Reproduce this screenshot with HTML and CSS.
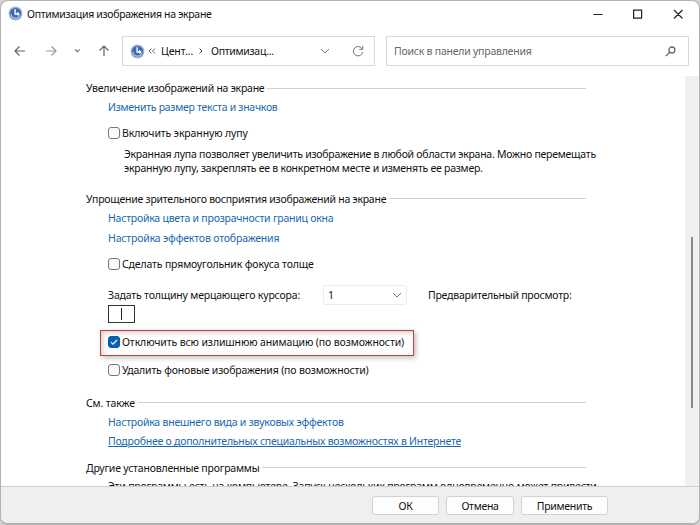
FILE: index.html
```html
<!DOCTYPE html>
<html lang="ru">
<head>
  <meta charset="UTF-8">
  <title>Оптимизация изображения на экране</title>
  <link rel="stylesheet" href="styles.css">
</head>
<body>
  <svg width="0" height="0" class="defs">
    <symbol id="ease" viewBox="0 0 16 16">
      <circle cx="8" cy="8" r="7.4" fill="#9fb0d3"/>
      <circle cx="8" cy="8" r="5.9" fill="#3d68b4"/>
      <path d="M3.2 8.500a4.800 4.800 0 0 0 9.400 1" fill="none" stroke="#b9cbe8" stroke-width="1.200"/>
      <path d="M7.600 3.500v5h3.600M9.800 7l1.600 1.500-1.600 1.400" fill="none" stroke="#fff" stroke-width="1.500"/>
    </symbol>
    <symbol id="down" viewBox="0 0 10 10">
      <path d="M1 3l4 4 4-4" fill="none" stroke="currentColor"/>
    </symbol>
  </svg>

  <div class="window">
    <header class="titlebar">
      <svg class="app-icon"><use href="#ease"/></svg>
      <span class="title">Оптимизация изображения на экране</span>
      <svg class="controls" width="90" height="12" viewBox="0 0 90 12" fill="none" stroke="#222" stroke-width="1.2">
        <path d="M.5 6.5h9M40.600 2.100h8v8h-8zM81 2l8.500 8.500M89.500 2L81 10.500"/>
      </svg>
    </header>

    <nav class="toolbar">
      <svg class="arrows" width="96" height="14" viewBox="0 0 96 14" fill="none" stroke-width="1.2">
        <path d="M11 7H1M5.500 2.500L1 7l4.500 4.500" stroke="#666"/>
        <path d="M32 7h10M37.500 2.500L42 7l-4.500 4.500" stroke="#999"/>
        <path d="M61 5.500l2.300 2.200L65.600 5.500" stroke="#777"/>
        <path d="M90 12V2M85.500 6.500L90 2l4.500 4.500" stroke="#666"/>
      </svg>
      <div class="address">
        <svg class="app-icon"><use href="#ease"/></svg>
        <svg class="back" width="8" height="8" viewBox="0 0 8 8"><path d="M3.500 1.500L1 4l2.500 2.500M7 1.500L4.500 4 7 6.500" fill="none" stroke="#555" stroke-width=".9"/></svg>
        <span class="crumb first">Цент...</span>
        <svg class="next" width="6" height="8" viewBox="0 0 6 8"><path d="M1.500 1.500L4 4 1.500 6.500" fill="none" stroke="#444"/></svg>
        <span class="crumb second">Оптимизац...</span>
        <svg class="chevron"><use href="#down"/></svg>
        <svg class="refresh" width="12" height="12" viewBox="0 0 12 12" fill="none" stroke="#777"><path d="M10.300 4.200A4.700 4.700 0 1 0 10.700 7M10.700 1v3.400H7.300"/></svg>
      </div>
      <div class="search">
        <span class="placeholder">Поиск в панели управления</span>
        <svg width="11" height="11" viewBox="0 0 11 11" fill="none" stroke="#666" stroke-width="1.300"><circle cx="6.900" cy="4" r="3"/><path d="M4.700 6.200L.8 10.100"/></svg>
      </div>
    </nav>

    <div class="body">
      <main class="content">
        <section class="group magnify">
          <h2>Увеличение изображений на экране</h2>
          <div class="link"><a class="l-size">Изменить размер текста и значков</a></div>
          <label class="check"><i class="box"></i><span class="c-lens">Включить экранную лупу</span></label>
          <p class="hint">Экранная лупа позволяет увеличить изображение в любой области экрана. Можно перемещать<br>экранную лупу, закреплять ее в конкретном месте и изменять ее размер.</p>
        </section>

        <section class="group visual">
          <h2>Упрощение зрительного восприятия изображений на экране</h2>
          <div class="link"><a>Настройка цвета и прозрачности границ окна</a></div>
          <div class="link"><a class="l-effects">Настройка эффектов отображения</a></div>
          <label class="check"><i class="box"></i><span>Сделать прямоугольник фокуса толще</span></label>
          <div class="cursor-row">
            <span class="cursor-label">Задать толщину мерцающего курсора:</span>
            <div class="select"><span>1</span><svg class="chevron"><use href="#down"/></svg></div>
            <span class="preview-label">Предварительный просмотр:</span>
          </div>
          <div class="preview"><i></i></div>
          <div class="highlight">
            <label class="check"><i class="box checked"><svg width="8" height="8" viewBox="0 0 8 8"><path d="M1 4.200l2 2L7 2" fill="none" stroke="#fff" stroke-width="1.100"/></svg></i><span class="c-anim">Отключить всю излишнюю анимацию (по возможности)</span></label>
          </div>
          <label class="check last"><i class="box"></i><span class="c-back">Удалить фоновые изображения (по возможности)</span></label>
        </section>

        <section class="group also">
          <h2 class="h-also">См. также</h2>
          <div class="link"><a>Настройка внешнего вида и звуковых эффектов</a></div>
          <div class="link"><a class="l-more">Подробнее о дополнительных специальных возможностях в Интернете</a></div>
        </section>

        <section class="group other">
          <h2 class="h-other">Другие установленные программы</h2>
          <p>Эти программы есть на компьютере. Запуск нескольких программ одновременно может привести</p>
        </section>
      </main>
      <div class="scrollbar"><div class="thumb"></div></div>
    </div>

    <footer class="footer">
      <button class="ok">ОК</button>
      <button class="cancel">Отмена</button>
      <button class="apply">Применить</button>
    </footer>
  </div>
</body>
</html>
```
FILE: styles.css
```css
* {
  box-sizing: border-box;
}

body {
  margin: 0;
  height: 525px;
  overflow: hidden;
  background: #d4d4d4;
  font-family: "Noto Sans", "Open Sans", sans-serif;
  font-size: 10.5px;
  letter-spacing: -.23px;
  color: #111;
  white-space: nowrap;
}

.defs {
  display: block;
}

.window {
  display: flex;
  flex-direction: column;
  width: 700px;
  height: 525px;
  border: 1px solid #b2b2b2;
  border-bottom-width: 2px;
  border-radius: 8px;
  background: #fff;
  overflow: hidden;
}

svg {
  flex: none;
}

.app-icon {
  width: 15px;
  height: 15px;
}

.chevron {
  width: 10px;
  height: 10px;
  color: #777;
}

.titlebar {
  display: flex;
  align-items: center;
  height: 25px;
  padding: 0 16px 0 7px;
}

.title {
  margin-left: 4px;
  letter-spacing: -.31px;
}

.controls {
  margin-left: auto;
}

.toolbar {
  display: flex;
  align-items: center;
  height: 50px;
  padding: 0 10px 0 13px;
}

.address,
.search {
  display: flex;
  align-items: center;
  height: 30px;
  border: 1px solid #d9d9d9;
}

.address {
  width: 253px;
  margin-left: 12px;
  padding-left: 7px;
}

.back {
  margin-left: 3px;
}

.crumb {
  letter-spacing: -.3px;
}

.crumb.first {
  width: 32px;
  margin-left: 5px;
  letter-spacing: -.1px;
}

.next {
  margin-left: 5px;
}

.crumb.second {
  width: 63px;
  margin-left: 7px;
}

.address .chevron {
  margin-left: 46px;
}

.refresh {
  margin-left: 22px;
}

.search {
  width: 303px;
  margin-left: 11px;
  padding: 0 12px 0 7px;
  justify-content: space-between;
}

.placeholder {
  color: #666;
}

.body {
  display: flex;
  height: 410px;
  overflow: hidden;
}

.content {
  width: 684px;
  padding: 2px 99px 0 85px;
}

h2 {
  display: flex;
  align-items: center;
  height: 20px;
  margin: 0;
  font-size: inherit;
  font-weight: normal;
  letter-spacing: -.25px;
}

h2::after {
  content: "";
  flex: 1;
  height: 1px;
  margin-left: 3px;
  background: #d0d0d0;
}

.h-also {
  letter-spacing: -.15px;
}

.h-other {
  letter-spacing: -.2px;
}

.link {
  height: 19.5px;
  padding-left: 22px;
  line-height: 19px;
  color: #1768ae;
}

.l-size {
  letter-spacing: -.28px;
}

.l-effects {
  letter-spacing: -.17px;
}

.l-more {
  text-decoration: underline;
}

.check {
  display: flex;
  align-items: center;
  height: 20px;
  margin: 5px 0 0 22px;
  letter-spacing: -.15px;
}

.c-anim,
.c-lens {
  letter-spacing: -.12px;
}

.c-back {
  letter-spacing: -.18px;
}

.box {
  display: flex;
  align-items: center;
  justify-content: center;
  width: 12px;
  height: 12px;
  margin-right: 2px;
  border: 1px solid #777;
  border-radius: 3px;
  background: #fafafa;
}

.box.checked {
  border-color: #075aa9;
  background: #0961b5;
}

p {
  margin: 4px 0 0;
  line-height: 14px;
}

.hint {
  padding-left: 38px;
  letter-spacing: -.25px;
}

.visual {
  margin-top: 14px;
}

.visual .link {
  height: 20px;
}

.cursor-row {
  display: flex;
  align-items: center;
  height: 20px;
  margin-top: 11px;
  padding-left: 22px;
}

.cursor-label {
  width: 215px;
  letter-spacing: -.18px;
}

.select {
  display: flex;
  align-items: center;
  justify-content: space-between;
  width: 84px;
  height: 20px;
  padding: 0 4px;
  border: 1px solid #ededed;
  border-radius: 2px;
}

.preview-label {
  margin-left: 21px;
}

.preview {
  display: flex;
  align-items: center;
  justify-content: center;
  width: 27px;
  height: 18px;
  margin-left: 22px;
  border: 1px solid #333;
}

.preview i {
  width: 1px;
  height: 12px;
  background: #222;
}

.highlight {
  width: 314px;
  height: 26px;
  margin: 7px 0 0 14px;
  border: 1px solid #c93d42;
  box-shadow: 2px 2px 5px rgba(0, 0, 0, .25), inset 2px 2px 4px rgba(0, 0, 0, .18);
}

.highlight .check {
  margin: 1px 0 0 7px;
}

.check.last {
  margin-top: 4px;
}

.also {
  margin-top: 13px;
}

.other {
  margin-top: 6px;
}

.other p {
  margin-top: 1px;
  padding-left: 22px;
  letter-spacing: -.19px;
}

.scrollbar {
  width: 14px;
  background: #f0f0f0;
}

.thumb {
  width: 2px;
  height: 171px;
  margin: 161px 0 0 6px;
  background: #888;
}

.footer {
  display: flex;
  gap: 7px;
  flex: 1;
  padding: 9px 0 0 371px;
  border-top: 1px solid #cfcfcf;
  background: #efefef;
}

button {
  height: 19px;
  padding: 0;
  border: 1px solid #d2d2d2;
  border-radius: 3px;
  background: #fdfdfd;
  font: inherit;
  letter-spacing: -.3px;
  color: #111;
}

.ok {
  width: 67px;
}

.cancel {
  width: 68px;
}

.apply {
  width: 87px;
}
```
